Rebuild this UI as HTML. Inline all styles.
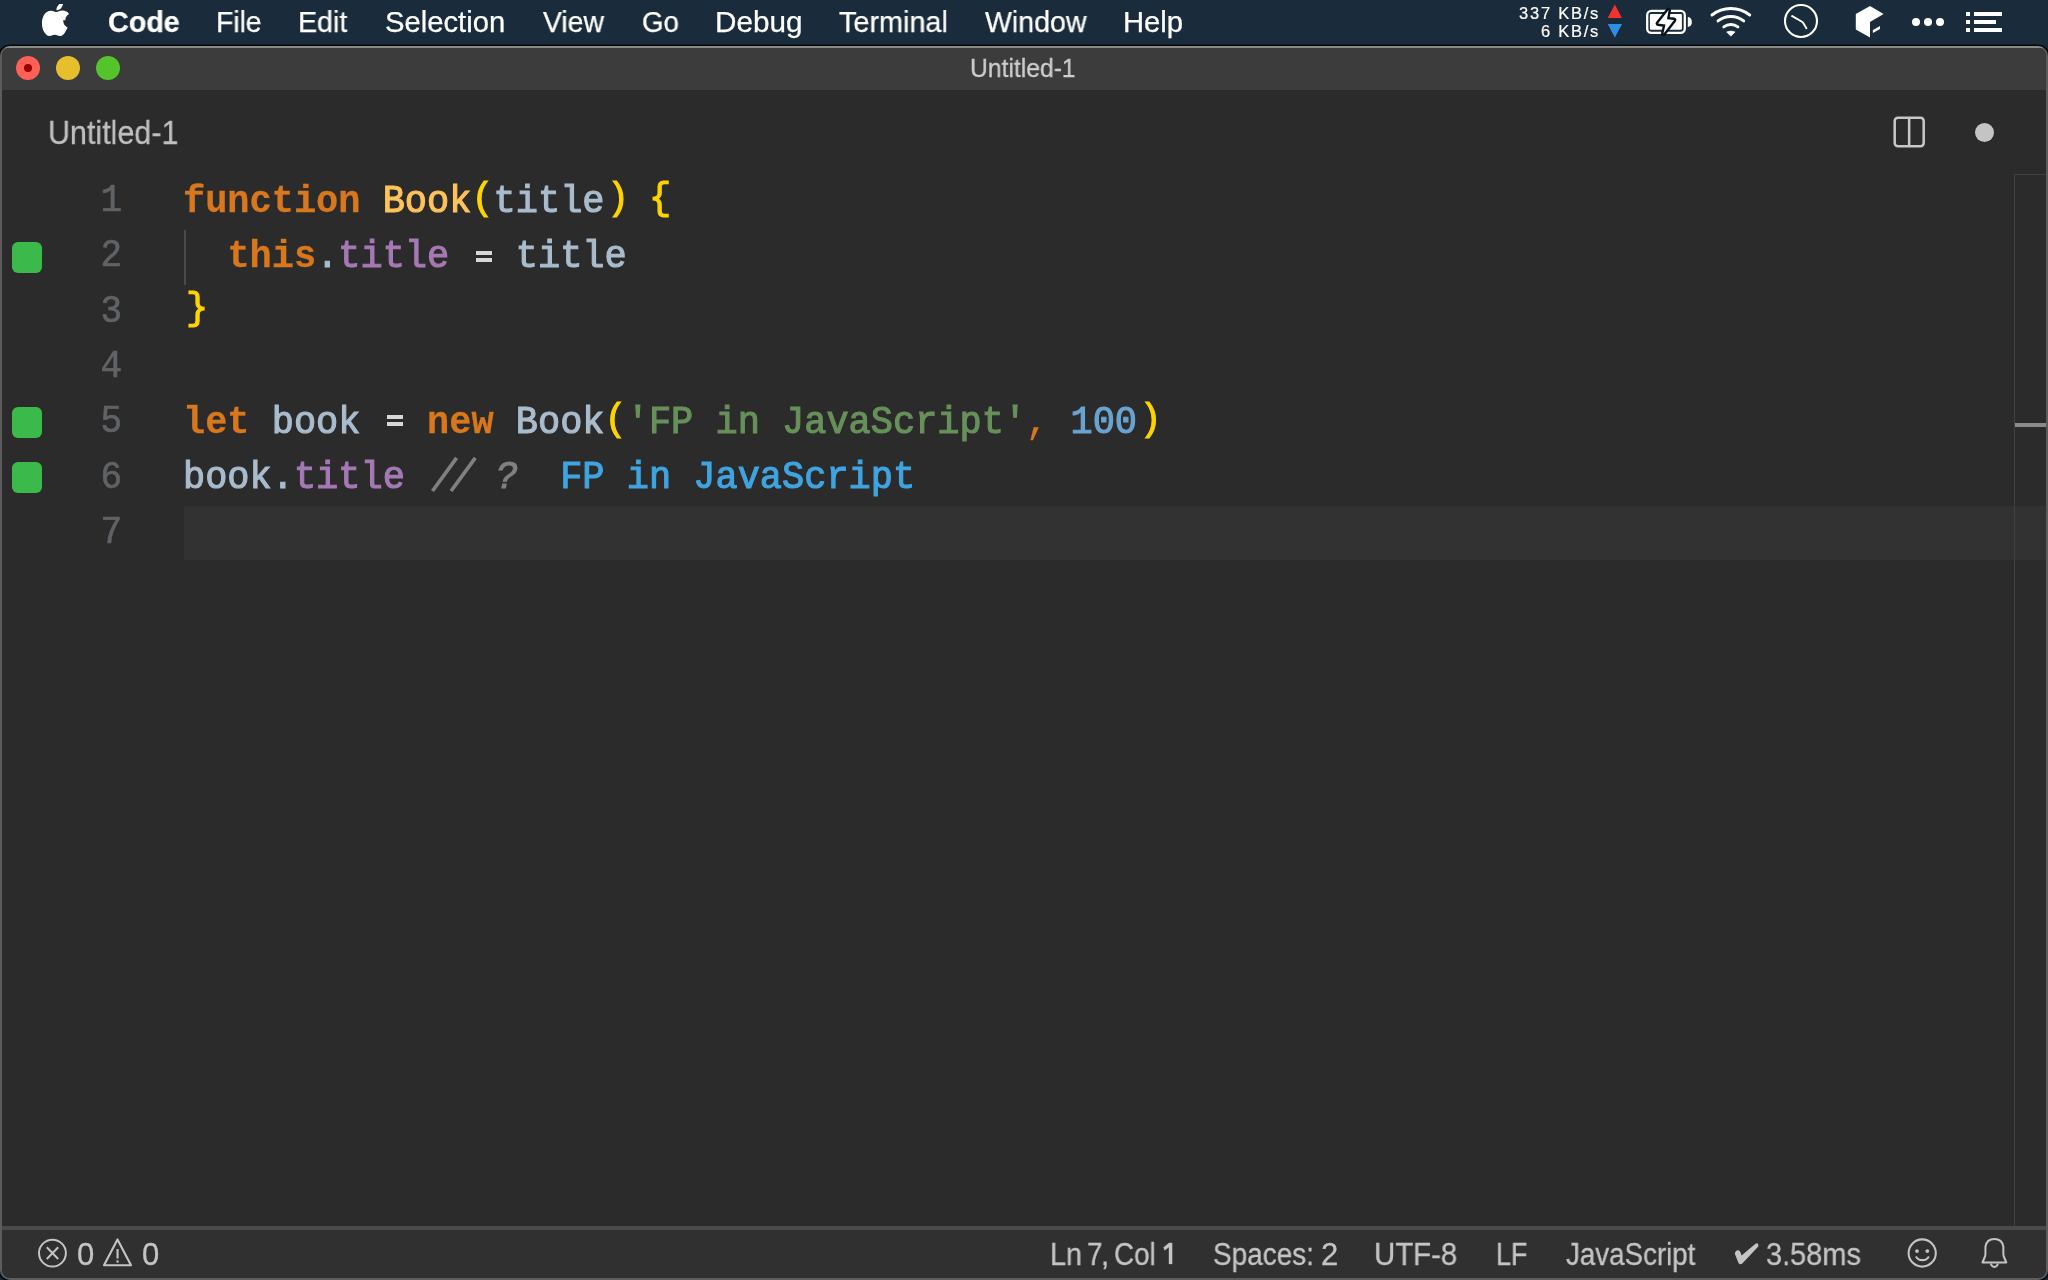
<!DOCTYPE html>
<html><head><meta charset="utf-8">
<style>
*{margin:0;padding:0;box-sizing:border-box}
html,body{width:2048px;height:1280px;overflow:hidden;background:#1a2c3b;font-family:"Liberation Sans",sans-serif}
.abs{position:absolute}
#menubar{position:absolute;left:0;top:0;width:2048px;height:44px;background:#1a2c3b;color:#fff}
.mi{position:absolute;top:0.3px;font-size:29px;line-height:44px;white-space:nowrap;color:#fff;will-change:transform;transform-origin:0 0;-webkit-text-stroke:0.25px #fff}
#shadow{display:none}
#win{position:absolute;left:0;top:46px;width:2048px;height:1234px;background:linear-gradient(#8a8a8a 0,#8a8a8a 2px,#5c5c5c 2px);box-shadow:0 0 0 1.6px #04080c;border-radius:10px 10px 10px 10px;overflow:hidden}
#inner{position:absolute;left:2px;top:2px;right:2px;bottom:2.5px;background:#2b2b2b;border-radius:8px;overflow:hidden}
#titlebar{position:absolute;left:0;top:0;width:100%;height:42px;background:#3c3c3c}
.tl{position:absolute;width:24px;height:24px;border-radius:50%;top:8px}
#title{position:absolute;left:968.1px;top:-2.5px;font-size:26px;line-height:44px;color:#cfcfcf;white-space:nowrap;transform:scaleX(0.949);transform-origin:0 0;will-change:transform;-webkit-text-stroke:0.3px #cfcfcf}
#tab{position:absolute;left:45.95px;top:62.8px;font-size:33px;line-height:44px;color:#bfbfbf;white-space:nowrap;transform:scaleX(0.923);transform-origin:0 0;will-change:transform;-webkit-text-stroke:0.3px #bfbfbf}
.code{position:absolute;font-family:"Liberation Mono",monospace;font-size:36.97px;white-space:pre;line-height:55.33px;height:55.33px;transform:scaleY(1.04);transform-origin:0 37.5px;will-change:transform;margin-top:0.8px}
.ln{position:absolute;left:59px;width:61px;text-align:right;font-family:"Liberation Mono",monospace;font-size:36px;line-height:55.33px;color:#606366;transform:scaleY(1.1);transform-origin:0 37.6px;will-change:transform;-webkit-text-stroke:0.6px #606366}
.gs{position:absolute;left:9.7px;width:30.7px;height:30.7px;border-radius:6px;background:#3bb94a}
.k{color:#d9771c;font-weight:bold;-webkit-text-stroke:0.3px #d9771c}
.f{color:#fec35a;-webkit-text-stroke:1.1px #fec35a}
.v{color:#a9bccd;-webkit-text-stroke:1.1px #a9bccd}
.p{color:#a679b5;-webkit-text-stroke:1.1px #a679b5}
.b{color:#fcd400;-webkit-text-stroke:1.1px #fcd400;position:relative;top:-3px}
.o{color:#d6d6d6;font-weight:bold}
.s{color:#67905a;-webkit-text-stroke:1.1px #67905a}
.n{color:#6aa3cf;-webkit-text-stroke:1.1px #6aa3cf}
.c{color:#808080;font-style:italic;-webkit-text-stroke:1.1px #808080}
.q{color:#3fa4e0;-webkit-text-stroke:1.1px #3fa4e0}
#status{position:absolute;left:0;top:1178px;width:100%;height:52px;background:#303030;border-top:4px solid #4a4a4a}
.st{position:absolute;top:0;font-size:31px;line-height:50px;color:#c4c4c4;white-space:nowrap;transform-origin:0 0;will-change:transform;-webkit-text-stroke:0.3px #c4c4c4}
</style></head><body>
<div id="menubar">
  <svg class="abs" style="left:41.5px;top:3.5px" width="30" height="34" viewBox="0 0 30 34">
    <path fill="#fff" d="M24.6 18.1c0-4.4 3.6-6.5 3.8-6.6-2.1-3-5.3-3.4-6.400-3.5-2.700-.3-5.300 1.600-6.700 1.600-1.400 0-3.500-1.600-5.800-1.500C6.400 8.100 3.600 9.900 2.100 12.600-1 18-.7 26 2.300 30.400c1.500 2.100 3.200 4.500 5.500 4.400 2.200-.1 3-1.400 5.700-1.400 2.600 0 3.400 1.400 5.700 1.400 2.400 0 3.900-2.200 5.300-4.300 1.700-2.400 2.400-4.800 2.400-4.900-.1 0-4.600-1.800-4.600-7.500zM20.300 5.200c1.200-1.500 2-3.500 1.800-5.500-1.700.1-3.800 1.200-5 2.600-1.100 1.300-2.100 3.300-1.800 5.300 1.900.1 3.800-1 5-2.400z" transform="translate(0,-1) scale(0.95)"/>
  </svg>
  <div class="mi" style="left:108.0px;transform:scaleX(0.989);font-weight:bold">Code</div>
  <div class="mi" style="left:215.5px;transform:scaleX(0.975)">File</div>
  <div class="mi" style="left:297.6px;transform:scaleX(0.986)">Edit</div>
  <div class="mi" style="left:384.6px;transform:scaleX(1.008)">Selection</div>
  <div class="mi" style="left:543.0px;transform:scaleX(0.976)">View</div>
  <div class="mi" style="left:642.1px;transform:scaleX(0.955)">Go</div>
  <div class="mi" style="left:714.8px;transform:scaleX(1.023)">Debug</div>
  <div class="mi" style="left:839.3px;transform:scaleX(0.993)">Terminal</div>
  <div class="mi" style="left:984.9px;transform:scaleX(0.984)">Window</div>
  <div class="mi" style="left:1123.2px;transform:scaleX(1.008)">Help</div>
  <!-- net speed -->
  <div class="abs" style="left:1490px;top:3.5px;width:110px;text-align:right;font-size:16.5px;line-height:18.4px;color:#fff;letter-spacing:1.75px;will-change:transform;-webkit-text-stroke:0.2px #fff">337 KB/s<br>6 KB/s</div>
  <svg class="abs" style="left:1600px;top:0" width="30" height="44">
    <polygon points="7.7,4.4 22,18 7.7,18" fill="none"/>
    <polygon points="14.85,4.4 22,18 7.7,18" fill="#f2322f"/>
    <polygon points="7.7,24 22,24 14.85,37.6" fill="#2e8ee6"/>
  </svg>
  <!-- battery -->
  <svg class="abs" style="left:1640px;top:0" width="60" height="44">
    <rect x="7.2" y="10.9" width="37.6" height="22" rx="4.2" fill="none" stroke="#fff" stroke-width="2.3"/>
    <rect x="9.9" y="13.9" width="32" height="15.9" rx="1.2" fill="#fff"/>
    <path d="M47.8,17 A4.1,5 0 0 1 47.8,27 Z" fill="#fff"/>
    <path d="M28.6,10 L18,23.6 L25.5,24.5 L23.4,33.75 L34,20 L27,19.25 Z" fill="#06121c" stroke="#06121c" stroke-width="4.8" stroke-linejoin="round"/>
    <path d="M28.6,10 L18,23.6 L25.5,24.5 L23.4,33.75 L34,20 L27,19.25 Z" fill="#fff"/>
  </svg>
  <!-- wifi -->
  <svg class="abs" style="left:1700px;top:0" width="60" height="44">
    <g fill="none" stroke="#fff" stroke-width="2.9" stroke-linecap="round">
      <path d="M11.98,15.01 A30.60,30.60 0 0 1 49.72,15.01"/>
      <path d="M18.05,20.99 A20.50,20.50 0 0 1 43.65,20.99"/>
      <path d="M23.77,26.89 A11.70,11.70 0 0 1 37.93,26.89"/>
    </g>
    <path d="M26.6,31.9 Q30.85,30.2 35.1,31.9 L30.85,36.2 Z" fill="#fff" stroke="#fff" stroke-width="0.6" stroke-linejoin="round"/>
  </svg>
  <!-- clock -->
  <svg class="abs" style="left:1770px;top:0" width="60" height="44">
    <circle cx="31" cy="21" r="16" fill="none" stroke="#fff" stroke-width="2.1"/>
    <path d="M21.4,15.6 L31.6,21.5 Q32.9,22.3 33.6,23.5 L36.8,28.9" fill="none" stroke="#fff" stroke-width="1.9" stroke-linecap="butt"/>
  </svg>
  <!-- cube -->
  <svg class="abs" style="left:1850px;top:0" width="40" height="44">
    <path d="M5.8,14 L20,5.9 L33.6,14 L20,22 L20,37.6 L5.8,29.5 Z" fill="#fff"/>
    <path d="M22.9,30 L30,26 L30,29 L22.9,33 Z" fill="#fff"/>
  </svg>
  <!-- dots -->
  <svg class="abs" style="left:1900px;top:0" width="50" height="44">
    <circle cx="16" cy="22" r="4" fill="#fff"/><circle cx="28" cy="22" r="4" fill="#fff"/><circle cx="40" cy="22" r="4" fill="#fff"/>
  </svg>
  <!-- list -->
  <svg class="abs" style="left:1960px;top:0" width="50" height="44">
    <g fill="#fff">
      <rect x="6" y="12" width="4" height="4"/><rect x="14" y="12" width="28" height="4"/>
      <rect x="6" y="20" width="4" height="4"/><rect x="14" y="20" width="22" height="4"/>
      <rect x="6" y="28" width="4" height="4"/><rect x="14" y="28" width="28" height="4"/>
    </g>
  </svg>
</div>
<div id="shadow"></div>
<div id="win">
 <div id="inner">
  <div id="titlebar">
    <div class="tl" style="left:14px;background:#fe5f57"><div style="position:absolute;left:8px;top:8px;width:8px;height:8px;border-radius:50%;background:#990000"></div></div>
    <div class="tl" style="left:54px;background:#e6bf2c"></div>
    <div class="tl" style="left:94px;background:#55c32c"></div>
    <div id="title">Untitled-1</div>
  </div>
  <div id="tab">Untitled-1</div>
  <!-- split icon -->
  <svg class="abs" style="left:1889px;top:66.5px" width="36" height="36">
    <rect x="3.7" y="2.7" width="29" height="28.6" rx="3.2" fill="none" stroke="#c8c8c8" stroke-width="2.5"/>
    <rect x="16.9" y="3" width="2.5" height="28" fill="#c8c8c8"/>
  </svg>
  <div class="abs" style="left:1973px;top:74.6px;width:19.2px;height:19.2px;border-radius:50%;background:#c4c4c4"></div>

  <!-- editor -->
  <div class="abs" style="left:182px;top:458px;width:1862px;height:54px;background:#323232"></div>
  <div class="abs" style="left:182px;top:182px;width:2px;height:55px;background:#4a4a4a"></div>
  <div class="abs" style="left:2012px;top:126px;width:1px;height:1100px;background:#424242"></div>
  <div class="abs" style="left:2012px;top:126px;width:32px;height:1px;background:#424242"></div>
  <div class="abs" style="left:2013px;top:375px;width:32px;height:4px;background:#8a8a88"></div>

  <div class="gs" style="top:194px"></div>
  <div class="gs" style="top:359px"></div>
  <div class="gs" style="top:414px"></div>

  <div class="ln" style="top:126px">1</div>
  <div class="ln" style="top:181.33px">2</div>
  <div class="ln" style="top:236.67px">3</div>
  <div class="ln" style="top:292px">4</div>
  <div class="ln" style="top:347.33px">5</div>
  <div class="ln" style="top:402.67px">6</div>
  <div class="ln" style="top:458px">7</div>

  <div class="code" style="left:181px;top:126px"><span class="k">function</span> <span class="f">Book</span><span class="b">(</span><span class="v">title</span><span class="b" style="left:2.5px">)</span> <span class="b">{</span></div>
  <div class="code" style="left:181px;top:181.33px">  <span class="k">this</span><span class="v">.</span><span class="p">title</span>   <span class="v">title</span></div>
  <div class="code" style="left:181px;top:236.67px"><span class="b" style="left:3px">}</span></div>
  <div class="code" style="left:181px;top:347.33px"><span class="k">let</span> <span class="v">book</span>   <span class="k">new</span> <span class="v">Book</span><span class="b">(</span><span class="s">'FP in JavaScript'</span><span class="k" style="font-weight:normal">,</span> <span class="n">100</span><span class="b" style="left:2.5px">)</span></div>
  <div class="code" style="left:181px;top:402.67px"><span class="v">book.</span><span class="p">title</span> <span class="c">   <span style="position:relative;left:2px">?</span></span>  <span class="q">FP in JavaScript</span></div>

  <svg class="abs" style="left:400px;top:400px" width="100" height="60">
    <path d="M30.5,43 L54.6,9.8 M49.1,43 L73.3,9.8" stroke="#808080" stroke-width="3.7" fill="none"/>
  </svg>
  <div class="abs" style="left:473.9px;top:202.5px;width:16.1px;height:4.5px;background:#d6d7d6"></div>
  <div class="abs" style="left:473.9px;top:210px;width:16.1px;height:4px;background:#d6d7d6"></div>
  <div class="abs" style="left:385px;top:366.5px;width:16.3px;height:4.4px;background:#d6d7d6"></div>
  <div class="abs" style="left:385px;top:373.9px;width:16.3px;height:4.2px;background:#d6d7d6"></div>
  <!-- status -->
  <div id="status">
    <svg class="abs" style="left:34px;top:0px" width="130" height="48">
      <circle cx="16.45" cy="23.1" r="13.45" fill="none" stroke="#c4c4c4" stroke-width="2"/>
      <path d="M10.8,17.2 L22.2,29 M22.2,17.2 L10.8,29" stroke="#c4c4c4" stroke-width="2"/>
      <path d="M81.5,9.4 L95,35.2 L68,35.2 Z" fill="none" stroke="#c4c4c4" stroke-width="2.1" stroke-linejoin="round"/>
      <rect x="80.5" y="19" width="2.1" height="9.5" fill="#c4c4c4"/><rect x="80.5" y="30.3" width="2.1" height="2.4" fill="#c4c4c4"/>
    </svg>
    <div class="st" style="left:75.0px">0</div>
    <div class="st" style="left:139.8px">0</div>
    <div class="st" style="left:1047.6px;transform:scaleX(0.926)">Ln</div>
    <div class="st" style="left:1085.1px;transform:scaleX(0.9);letter-spacing:-1.5px">7,</div>
    <div class="st" style="left:1112.1px;transform:scaleX(0.895)">Col</div>
    <svg class="abs" style="left:1150px;top:0" width="30" height="48"><path d="M11.6,17.4 L17,13 L20.1,13 L20.1,33.9 L17,33.9 L17,16.9 L12.8,20.2 Z" fill="#c4c4c4" stroke="#c4c4c4" stroke-width="0.4" stroke-linejoin="round"/></svg>
    <div class="st" style="left:1211.0px;transform:scaleX(0.900)">Spaces:</div>
    <div class="st" style="left:1318.5px;transform:scaleX(0.980)">2</div>
    <div class="st" style="left:1372.3px;transform:scaleX(0.948)">UTF-8</div>
    <div class="st" style="left:1493.5px;transform:scaleX(0.867)">LF</div>
    <div class="st" style="left:1564.0px;transform:scaleX(0.894)">JavaScript</div>
    <div class="st" style="left:1763.9px;transform:scaleX(0.934)">3.58ms</div>
    <svg class="abs" style="left:1728px;top:0px" width="40" height="48">
      <path d="M4.9,24 C5,21 7,19.8 9,20.5 C10,21 10.5,22 11.5,25.5 L25.5,13.8 C27,12.6 28.8,13.3 28.3,16.5 L13,32.8 C12,34.5 9.5,34.8 8.5,33 Z" fill="#c4c4c4"/>
    </svg>
    <svg class="abs" style="left:1900px;top:0px" width="120" height="48">
      <circle cx="20.2" cy="23" r="13.6" fill="none" stroke="#c4c4c4" stroke-width="2.1"/>
      <circle cx="15" cy="21.1" r="1.9" fill="#c4c4c4"/><circle cx="25.3" cy="21.1" r="1.9" fill="#c4c4c4"/>
      <path d="M13.9,26.4 A7.5,7.5 0 0 0 26.9,26.4" fill="none" stroke="#c4c4c4" stroke-width="2.1"/>
      <path d="M80.5,32.5 L83.2,26 C83.8,23.5 83.2,19.5 83.5,16.5 C84.3,11.5 88,8.9 92.4,8.9 C96.8,8.9 100.5,11.5 101.3,16.5 C101.6,19.5 101,23.5 101.6,26 L104.3,32.5 Z" fill="none" stroke="#c4c4c4" stroke-width="2" stroke-linejoin="round"/>
      <path d="M89,33.5 A3.4,3.4 0 0 0 95.8,33.5" fill="none" stroke="#c4c4c4" stroke-width="2"/>
    </svg>
  </div>
 </div>
</div>
</body></html>
